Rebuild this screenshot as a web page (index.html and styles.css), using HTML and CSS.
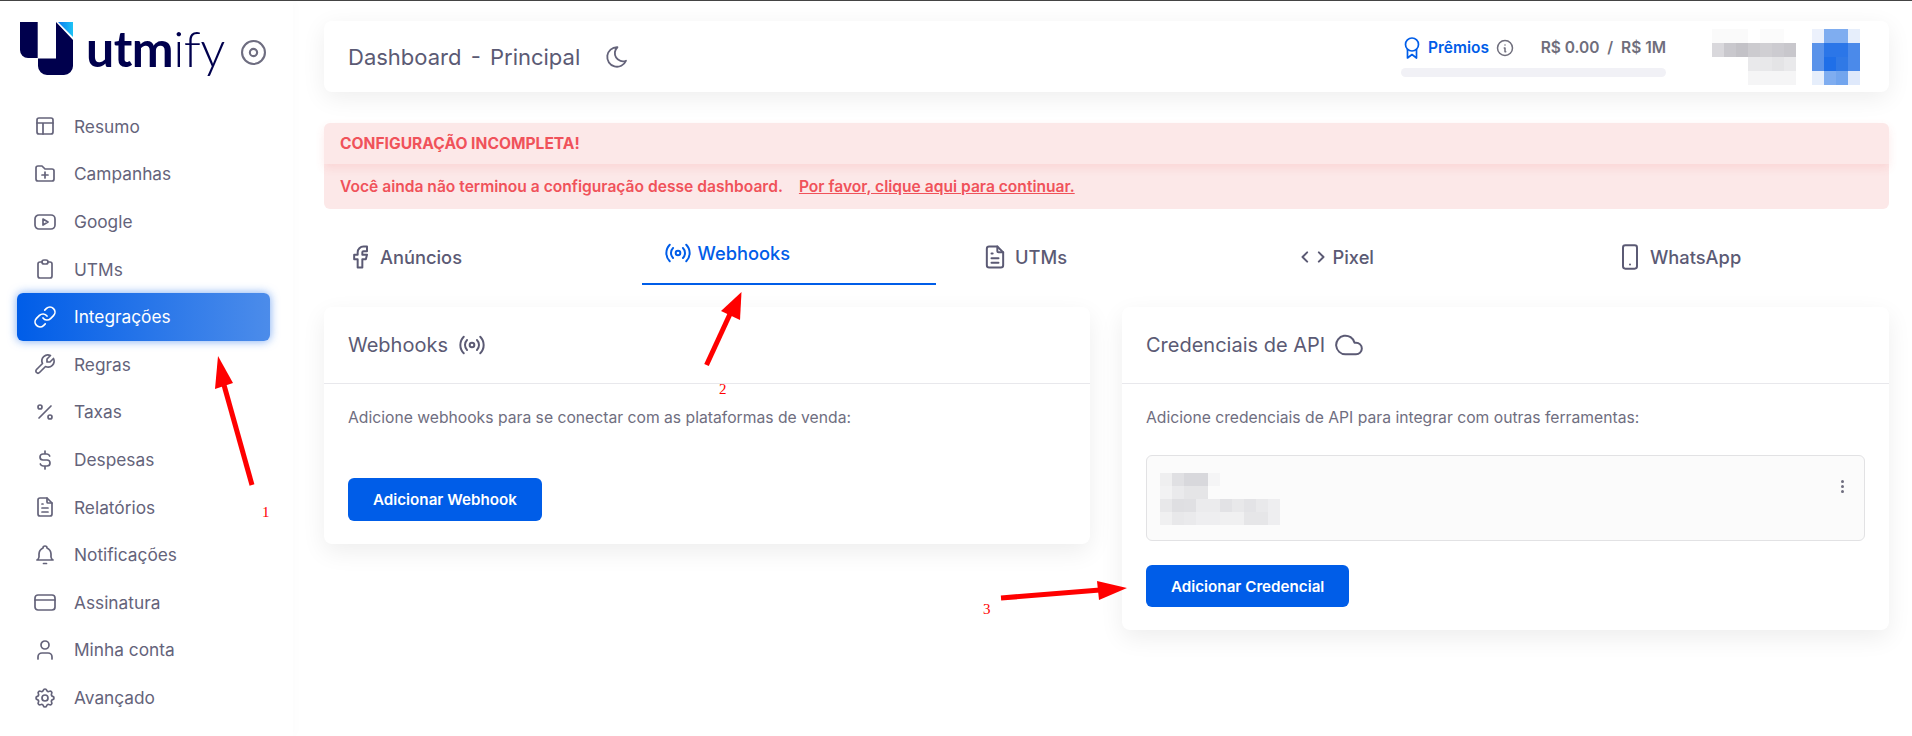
FILE: index.html
```html
<!DOCTYPE html>
<html lang="pt-BR">
<head>
    <meta charset="UTF-8">
    <meta name="viewport" content="width=device-width, initial-scale=1.0">
    <title>Utmify - Integrações</title>
    <link rel="stylesheet" href="styles.css">
</head>
<body>
    <div class="app">
        <aside class="sidebar">
            <div class="brand">
                <svg class="brand-mark" viewBox="0 0 53 53">
                    <defs>
                        <linearGradient id="brandTip" x1="0" y1="0" x2="1" y2="0">
                            <stop offset="0" stop-color="#0a78ee"/>
                            <stop offset="1" stop-color="#1ec4f6"/>
                        </linearGradient>
                    </defs>
                    <path d="M0 0h17.700v36H8a8 8 0 0 1-8-8z" fill="#00004d"/>
                    <path d="M36 0l17 18v26a9 9 0 0 1-9 9H27a9 9 0 0 1-9-9v-7.500h18z" fill="#00004d"/>
                    <path d="M38 0h15v15z" fill="url(#brandTip)"/>
                </svg>
                <span class="brand-name"><b>utm</b>ify</span>
                <svg class="brand-toggle" viewBox="0 0 24 24"><circle cx="12" cy="12" r="11"/><circle cx="12" cy="12" r="3.500"/></svg>
            </div>
            <nav class="nav">
                <a class="nav-item"><svg class="icon" viewBox="0 0 24 24"><rect x="4" y="4" width="16" height="16" rx="2"/><path d="M4 9h16M10 9v11"/></svg>Resumo</a>
                <a class="nav-item"><svg class="icon" viewBox="0 0 24 24"><path d="M12 19H5a2 2 0 0 1-2-2V6a2 2 0 0 1 2-2h4l3 3h7a2 2 0 0 1 2 2v8a2 2 0 0 1-2 2z"/><path d="M12 10v6M9 13h6"/></svg>Campanhas</a>
                <a class="nav-item"><svg class="icon" viewBox="0 0 24 24"><rect x="2" y="5" width="20" height="14" rx="4"/><path d="M10 9l5 3-5 3z"/></svg>Google</a>
                <a class="nav-item"><svg class="icon" viewBox="0 0 24 24"><path d="M9 5H7a2 2 0 0 0-2 2v12a2 2 0 0 0 2 2h10a2 2 0 0 0 2-2V7a2 2 0 0 0-2-2h-2"/><rect x="9" y="3" width="6" height="4" rx="2"/></svg>UTMs</a>
                <a class="nav-item active"><svg class="icon" viewBox="0 0 24 24"><path d="M10 13a5 5 0 0 0 7.540.540l3-3a5 5 0 0 0-7.070-7.070l-1.720 1.710"/><path d="M14 11a5 5 0 0 0-7.540-.540l-3 3a5 5 0 0 0 7.070 7.070l1.710-1.710"/></svg>Integrações</a>
                <a class="nav-item"><svg class="icon" viewBox="0 0 24 24"><path d="M17 10h-3V7l3.500-3.500a6 6 0 0 0-8 8l-6 6a2 2 0 0 0 3 3l6-6a6 6 0 0 0 8-8z"/></svg>Regras</a>
                <a class="nav-item"><svg class="icon" viewBox="0 0 24 24"><circle cx="17" cy="17" r="2"/><circle cx="7" cy="7" r="2"/><path d="M6 18L18 6"/></svg>Taxas</a>
                <a class="nav-item"><svg class="icon" viewBox="0 0 24 24"><path d="M16.700 8a3 3 0 0 0-2.700-2h-4a3 3 0 0 0 0 6h4a3 3 0 0 1 0 6h-4a3 3 0 0 1-2.700-2M12 3v3m0 12v3"/></svg>Despesas</a>
                <a class="nav-item"><svg class="icon" viewBox="0 0 24 24"><path d="M14 3v4a1 1 0 0 0 1 1h4"/><path d="M17 21H7a2 2 0 0 1-2-2V5a2 2 0 0 1 2-2h7l5 5v11a2 2 0 0 1-2 2z"/><path d="M9 9h1M9 13h6M9 17h6"/></svg>Relatórios</a>
                <a class="nav-item"><svg class="icon" viewBox="0 0 24 24"><path d="M10 5a2 2 0 1 1 4 0a7 7 0 0 1 4 6v3a4 4 0 0 0 2 3H4a4 4 0 0 0 2-3v-3a7 7 0 0 1 4-6"/><path d="M10.500 20.500h3"/></svg>Notificações</a>
                <a class="nav-item"><svg class="icon" viewBox="0 0 24 24"><rect x="2" y="5" width="20" height="15" rx="3"/><path d="M2 10h20"/></svg>Assinatura</a>
                <a class="nav-item"><svg class="icon" viewBox="0 0 24 24"><circle cx="12" cy="7" r="4"/><path d="M5 21v-2a4 4 0 0 1 4-4h6a4 4 0 0 1 4 4v2"/></svg>Minha conta</a>
                <a class="nav-item"><svg class="icon" viewBox="0 0 24 24"><path d="M10.325 4.317c.426-1.756 2.924-1.756 3.350 0a1.724 1.724 0 0 0 2.573 1.066c1.543-.940 3.310.826 2.370 2.370a1.724 1.724 0 0 0 1.065 2.572c1.756.426 1.756 2.924 0 3.350a1.724 1.724 0 0 0-1.066 2.573c.940 1.543-.826 3.310-2.370 2.370a1.724 1.724 0 0 0-2.572 1.065c-.426 1.756-2.924 1.756-3.350 0a1.724 1.724 0 0 0-2.573-1.066c-1.543.940-3.310-.826-2.370-2.370a1.724 1.724 0 0 0-1.065-2.572c-1.756-.426-1.756-2.924 0-3.350a1.724 1.724 0 0 0 1.066-2.573c-.940-1.543.826-3.310 2.370-2.370c1 .608 2.296.070 2.572-1.065z"/><circle cx="12" cy="12" r="3"/></svg>Avançado</a>
            </nav>
        </aside>

        <main class="main">
            <header class="topbar">
                <h1 class="page-title">Dashboard - Principal</h1>
                <svg class="icon moon" viewBox="0 0 24 24"><path d="M12 3h.393a7.500 7.500 0 0 0 7.920 12.446A9 9 0 1 1 12 2.992z"/></svg>
                <div class="goal">
                    <div class="goal-row">
                        <svg class="icon award" viewBox="0 0 16 22"><circle cx="8" cy="7.500" r="6.500"/><path d="M3.500 12.500V21L8 17.500l4.500 3.500v-8.500"/></svg>
                        <span class="goal-label">Prêmios</span>
                        <svg class="icon info" viewBox="0 0 24 24"><circle cx="12" cy="12" r="10"/><path d="M12 8h.010M11 12h1v5h1"/></svg>
                        <span class="goal-value">R$ 0.00 &nbsp;/&nbsp; R$ 1M</span>
                    </div>
                    <div class="goal-bar"></div>
                </div>
                <svg class="mosaic-name" viewBox="0 0 84 56" shape-rendering="crispEdges">
                    <rect x="0" y="0" width="36" height="14" fill="#fafafa"/>
                    <rect x="48" y="0" width="24" height="14" fill="#fbfbfb"/>
                    <rect x="0" y="14" width="12" height="14" fill="#d9d8dc"/>
                    <rect x="12" y="14" width="12" height="14" fill="#c9c8cd"/>
                    <rect x="24" y="14" width="12" height="14" fill="#c3c2c7"/>
                    <rect x="36" y="14" width="12" height="14" fill="#cccbcf"/>
                    <rect x="48" y="14" width="12" height="14" fill="#d0cfd3"/>
                    <rect x="60" y="14" width="12" height="14" fill="#cccbd0"/>
                    <rect x="72" y="14" width="12" height="14" fill="#c8c7cc"/>
                    <rect x="36" y="28" width="12" height="14" fill="#e9e9eb"/>
                    <rect x="48" y="28" width="12" height="14" fill="#e8e8ea"/>
                    <rect x="60" y="28" width="12" height="14" fill="#e4e4e6"/>
                    <rect x="72" y="28" width="12" height="14" fill="#e9e9eb"/>
                    <rect x="36" y="42" width="48" height="14" fill="#f5f5f6"/>
                </svg>
                <svg class="mosaic-avatar" viewBox="0 0 48 56" shape-rendering="crispEdges">
                    <rect x="0" y="0" width="12" height="14" fill="#ecf1fc"/>
                    <rect x="12" y="0" width="24" height="14" fill="#7fadf0"/>
                    <rect x="36" y="0" width="12" height="14" fill="#e6eefb"/>
                    <rect x="0" y="14" width="12" height="28" fill="#5a93ea"/>
                    <rect x="12" y="14" width="24" height="14" fill="#2b76e8"/>
                    <rect x="36" y="14" width="12" height="28" fill="#4b8aea"/>
                    <rect x="12" y="28" width="12" height="14" fill="#1f6fe8"/>
                    <rect x="24" y="28" width="12" height="14" fill="#3079e6"/>
                    <rect x="0" y="42" width="12" height="14" fill="#e6eefb"/>
                    <rect x="12" y="42" width="12" height="14" fill="#7fadf0"/>
                    <rect x="24" y="42" width="12" height="14" fill="#72a5ee"/>
                    <rect x="36" y="42" width="12" height="14" fill="#dfe9fb"/>
                </svg>
            </header>

            <section class="alert">
                <div class="alert-head">CONFIGURAÇÃO INCOMPLETA!</div>
                <div class="alert-body">Você ainda não terminou a configuração desse dashboard. <a class="alert-link">Por favor, clique aqui para continuar.</a></div>
            </section>

            <div class="tabs">
                <a class="tab"><svg class="icon" viewBox="0 0 24 24"><path d="M7 10v4h3v7h4v-7h3l1-4h-4V8a1 1 0 0 1 1-1h3V3h-3a5 5 0 0 0-5 5v2z"/></svg>Anúncios</a>
                <a class="tab active"><svg class="icon" viewBox="0 0 24 24"><circle cx="12" cy="12" r="2"/><path d="M16.240 7.760a6 6 0 0 1 0 8.490m-8.480-.010a6 6 0 0 1 0-8.490m11.310-2.820a10 10 0 0 1 0 14.140m-14.140 0a10 10 0 0 1 0-14.140"/></svg>Webhooks</a>
                <a class="tab"><svg class="icon" viewBox="0 0 24 24"><path d="M14 3v4a1 1 0 0 0 1 1h4"/><path d="M17 21H7a2 2 0 0 1-2-2V5a2 2 0 0 1 2-2h7l5 5v11a2 2 0 0 1-2 2z"/><path d="M9 9h1M9 13h6M9 17h6"/></svg>UTMs</a>
                <a class="tab"><svg class="icon" viewBox="0 0 24 24"><path d="M7 8l-4 4 4 4M17 8l4 4-4 4"/></svg>Pixel</a>
                <a class="tab"><svg class="icon" viewBox="0 0 24 24"><rect x="6" y="2" width="12" height="20" rx="2"/><path d="M12 18.500v.010"/></svg>WhatsApp</a>
            </div>

            <div class="cards">
                <section class="card">
                    <div class="card-head">
                        <h2 class="card-title">Webhooks</h2>
                        <svg class="icon" viewBox="0 0 24 24"><circle cx="12" cy="12" r="2"/><path d="M16.240 7.760a6 6 0 0 1 0 8.490m-8.480-.010a6 6 0 0 1 0-8.490m11.310-2.820a10 10 0 0 1 0 14.140m-14.140 0a10 10 0 0 1 0-14.140"/></svg>
                    </div>
                    <div class="card-body">
                        <p class="card-text">Adicione webhooks para se conectar com as plataformas de venda:</p>
                        <button class="btn btn-webhook">Adicionar Webhook</button>
                    </div>
                </section>
                <section class="card">
                    <div class="card-head">
                        <h2 class="card-title">Credenciais de API</h2>
                        <svg class="icon" viewBox="0 0 24 24"><path d="M18 10h-1.260A8 8 0 1 0 9 20h9a5 5 0 0 0 0-10z"/></svg>
                    </div>
                    <div class="card-body">
                        <p class="card-text">Adicione credenciais de API para integrar com outras ferramentas:</p>
                        <div class="credential">
                            <svg class="mosaic-credential" viewBox="0 0 120 52" shape-rendering="crispEdges">
                                <rect x="0" y="0" width="12" height="13" fill="#efeff0"/>
                                <rect x="12" y="0" width="12" height="13" fill="#e0e0e3"/>
                                <rect x="24" y="0" width="24" height="13" fill="#d8d8dc"/>
                                <rect x="48" y="0" width="12" height="13" fill="#f5f5f6"/>
                                <rect x="0" y="13" width="12" height="13" fill="#f2f2f3"/>
                                <rect x="12" y="13" width="12" height="13" fill="#eaeaec"/>
                                <rect x="24" y="13" width="24" height="13" fill="#e5e5e7"/>
                                <rect x="0" y="26" width="12" height="13" fill="#e8e8ea"/>
                                <rect x="12" y="26" width="12" height="13" fill="#dfdfe2"/>
                                <rect x="24" y="26" width="12" height="13" fill="#e0e0e3"/>
                                <rect x="36" y="26" width="24" height="13" fill="#ebebed"/>
                                <rect x="60" y="26" width="12" height="13" fill="#e2e2e5"/>
                                <rect x="72" y="26" width="12" height="13" fill="#e8e8ea"/>
                                <rect x="84" y="26" width="12" height="13" fill="#e3e3e6"/>
                                <rect x="96" y="26" width="12" height="13" fill="#e9e9eb"/>
                                <rect x="108" y="26" width="12" height="13" fill="#eeeef0"/>
                                <rect x="0" y="39" width="12" height="13" fill="#f0f0f1"/>
                                <rect x="12" y="39" width="12" height="13" fill="#e8e8ea"/>
                                <rect x="24" y="39" width="12" height="13" fill="#eaeaec"/>
                                <rect x="36" y="39" width="24" height="13" fill="#eeeef0"/>
                                <rect x="60" y="39" width="24" height="13" fill="#f0f0f1"/>
                                <rect x="84" y="39" width="24" height="13" fill="#e6e6e8"/>
                                <rect x="108" y="39" width="12" height="13" fill="#eeeef0"/>
                            </svg>
                            <span class="dots"><i></i><i></i><i></i></span>
                        </div>
                        <button class="btn btn-credential">Adicionar Credencial</button>
                    </div>
                </section>
            </div>
        </main>
    </div>

    <svg class="arrows" viewBox="0 0 1912 736">
        <path d="M252 485L224 385" stroke="#f00" stroke-width="5"/>
        <path d="M218 356L233 383L215 389z" fill="#f00"/>
        <path d="M706.500 365L730 314" stroke="#f00" stroke-width="5"/>
        <path d="M741.500 292L740 320L721 311z" fill="#f00"/>
        <path d="M1001 598L1100 590" stroke="#f00" stroke-width="5"/>
        <path d="M1127 588L1099 600L1097 581z" fill="#f00"/>
    </svg>
    <span class="mark mark-1">1</span>
    <span class="mark mark-2">2</span>
    <span class="mark mark-3">3</span>
</body>
</html>
```

FILE: styles.css
```css
* { box-sizing: border-box; }
html, body { margin: 0; height: 736px; overflow: hidden; }
body { position: relative; font-family: Inter, "Noto Sans", sans-serif; color: #5b5a74; background: #fff; border-top: 1px solid #444; }

.app { display: flex; height: 735px; }
.icon { width: 24px; height: 24px; flex: none; fill: none; stroke: currentColor; stroke-width: 1.7; stroke-linecap: round; stroke-linejoin: round; }

/* sidebar */
.sidebar { width: 293px; flex: none; background: #fff; box-shadow: 4px 0 8px rgba(0, 0, 0, .012); z-index: 1; }
.brand { display: flex; align-items: flex-start; height: 101.6px; padding: 21px 0 0 20px; }
.brand-mark { width: 53px; height: 53px; flex: none; }
.brand-name { margin-left: 13px; font-family: Lato, sans-serif; font-size: 50px; line-height: 52px; color: #00004d; font-weight: 300; letter-spacing: -.5px; }
.brand-name b { font-weight: 700; }
.brand-toggle { width: 25px; height: 25px; margin: 18px 0 0 16px; flex: none; fill: none; stroke: #6e6d80; stroke-width: 2; }

.nav { display: flex; flex-direction: column; padding: 0 23px 0 17px; }
.nav-item { display: flex; align-items: center; gap: 17px; height: 47.6px; padding-left: 16px; font-size: 17.3px; color: #64637a; border-radius: 6px; }
.nav-item.active { color: #fff; background: linear-gradient(90deg, #005de8, #4c8cea); box-shadow: 0 0 10px rgba(30, 110, 235, .6); }

/* main column */
.main { flex: 1; min-width: 0; padding: 20px 23px 0 31px; }
.topbar { display: flex; align-items: center; height: 71px; padding: 0 29px 0 24px; background: #fff; border-radius: 8px; box-shadow: 0 6px 24px rgba(0, 0, 0, .07); }
.page-title { margin: 0; font-size: 22px; font-weight: 400; word-spacing: 3px; color: #5b5a74; }
.moon { width: 26px; height: 26px; margin-left: 24px; color: #64637a; }

.goal { margin-left: auto; width: 265px; }
.goal-row { display: flex; align-items: center; height: 22px; padding-left: 3px; }
.award { width: 16px; height: 22px; color: #005de8; }
.goal-label { margin-left: 8px; font-size: 15.5px; font-weight: 600; color: #005de8; }
.info { width: 18px; height: 18px; margin-left: 7px; color: #6f6e7c; stroke-width: 2; }
.goal-value { margin-left: auto; font-size: 15.5px; font-weight: 600; color: #6f6e7c; }
.goal-bar { height: 9px; margin-top: 9px; background: #f1f1f6; border-radius: 5px; }
.mosaic-name { width: 84px; height: 56px; margin-left: 46px; flex: none; }
.mosaic-avatar { width: 48px; height: 56px; margin-left: 16px; flex: none; }

/* alert */
.alert { margin-top: 31px; background: #fce8e8; border-radius: 6px; color: #f0525a; font-size: 15.6px; font-weight: 600; }
.alert-head { display: flex; align-items: center; height: 41px; padding-left: 16px; font-weight: 700; border-radius: 6px 6px 0 0; box-shadow: 0 4px 10px rgba(240, 80, 80, .12); }
.alert-body { display: flex; align-items: center; gap: 16px; height: 45px; padding-left: 16px; }
.alert-link { text-decoration: underline; }

/* tabs */
.tabs { display: grid; grid-template-columns: repeat(4, 317.5px) 1fr; height: 52px; margin-top: 24px; padding-left: 1px; align-items: start; }
.tab { display: flex; align-items: center; gap: 6px; height: 48px; padding-left: 21px; font-size: 18.3px; font-weight: 500; color: #5b5a74; }
.tab .icon { width: 28px; height: 28px; }
.tab.active { width: 294px; height: 52px; margin-left: -1px; padding-left: 22px; padding-bottom: 10px; color: #005de8; border-bottom: 2px solid #005de8; }

/* cards */
.cards { display: grid; grid-template-columns: 766px 767px; gap: 32px; margin-top: 22px; align-items: start; }
.card { background: #fff; border-radius: 8px; box-shadow: 0 8px 24px rgba(0, 0, 0, .07); }
.card-head { display: flex; align-items: center; gap: 10px; height: 77px; padding-left: 24px; border-bottom: 1px solid #e8e8ec; }
.card-head .icon { width: 28px; height: 28px; }
.card-title { margin: 0; font-size: 20px; font-weight: 400; color: #5b5a74; }
.card-body { padding: 23px 24px 23px; }
.card-text { margin: 0; font-size: 15.7px; line-height: 22px; color: #6f6e7f; }

.btn { display: block; padding: 0 25px; border: 0; border-radius: 6px; background: #005de8; color: #fff; font-family: inherit; font-size: 15.2px; font-weight: 600; }
.btn-webhook { height: 43px; margin-top: 49px; }
.btn-credential { height: 42px; margin-top: 24px; }

.credential { display: flex; justify-content: space-between; height: 86px; margin-top: 26px; padding: 17px 20px 0 12px; background: #fbfbfb; border: 1px solid #e2e2e4; border-radius: 6px; }
.mosaic-credential { width: 121px; height: 52px; flex: none; }
.dots { display: flex; flex-direction: column; gap: 2px; padding-top: 7px; }
.dots i { width: 3px; height: 3px; border-radius: 50%; background: #6f6e7f; }

/* red annotations drawn over the screenshot */
.arrows { position: absolute; left: 0; top: -1px; width: 1912px; height: 736px; pointer-events: none; z-index: 2; }
.mark { position: absolute; font-family: "Liberation Serif", serif; font-size: 15px; line-height: 16px; color: #f00; z-index: 2; }
.mark-1 { left: 262px; top: 503px; }
.mark-2 { left: 719px; top: 380px; }
.mark-3 { left: 983px; top: 600px; }
```
